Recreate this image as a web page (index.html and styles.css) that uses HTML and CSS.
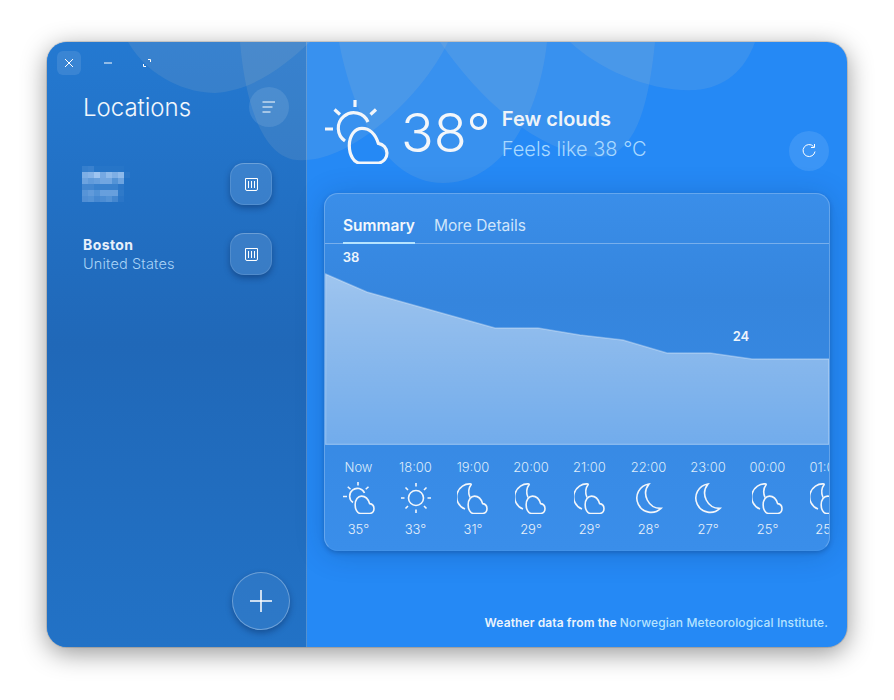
FILE: index.html
```html
<!DOCTYPE html>
<html lang="en">
<head>
  <meta charset="UTF-8">
  <meta name="viewport" content="width=device-width, initial-scale=1.0">
  <title>Weather</title>
  <link rel="stylesheet" href="styles.css">
</head>
<body>

<!-- Shared weather icons -->
<svg class="icon-defs" width="0" height="0">
  <symbol id="rays" viewBox="0 0 64 64">
    <path d="M30 0v7M0 29h8M9.500 9.500l5.500 5M51 9.500l-5.500 5"/>
  </symbol>
  <symbol id="cloud" viewBox="0 0 64 64">
    <path d="M35 63 C29 63 24.300 55 24.300 45.500 C24.300 35.500 30 28.300 37 28.300 C44.500 28.300 50.500 34 53.300 43.300 A10 10 0 0 1 54 63 Z"/>
  </symbol>
  <symbol id="sun-cloud" viewBox="0 0 64 64">
    <use href="#rays"/>
    <path d="M20 41 A15.500 15.500 0 1 1 43 22"/>
    <use href="#cloud"/>
  </symbol>
  <symbol id="sun" viewBox="0 0 64 64">
    <circle cx="32" cy="32" r="15"/>
    <path d="M32 2v7M32 55v7M2 32h7M55 32h7M11 11l5 5M53 11l-5 5M11 53l5-5M53 53l-5-5"/>
  </symbol>
  <symbol id="moon" viewBox="0 0 64 64">
    <path d="M32 4 A28.500 28.500 0 1 0 56 52.700 A30 30 0 0 1 32 4 Z"/>
  </symbol>
  <symbol id="moon-cloud" viewBox="0 0 64 64">
    <path d="M29 4 A26 26 0 0 0 16 54"/>
    <path d="M29 4 C23 12 22 22 26 31"/>
    <use href="#cloud" x="-2"/>
  </symbol>
</svg>

<div class="window">
  <!-- Background petals -->
  <svg class="petals" viewBox="47 42 800 605">
    <path d="M128 42 C150 80 190 93 215 93 C255 90 285 65 310 42 Z"/>
    <path d="M240 42 C245 100 262 165 305 160 C350 160 420 100 448 42 Z"/>
    <path d="M339 42 C350 100 380 183 443 183 C505 183 540 110 547 42 Z"/>
    <path d="M440 42 C480 100 540 155 600 157 C640 155 650 90 655 42 Z"/>
    <path d="M570 42 C600 70 650 92 695 90 C725 88 745 70 755 42 Z"/>
  </svg>

  <aside class="sidebar">
    <div class="window-controls">
      <button class="control control-close">
        <svg width="10" height="10" viewBox="0 0 10 10"><path d="M1 1l8 8M9 1l-8 8"/></svg>
      </button>
      <button class="control">
        <svg width="10" height="10" viewBox="0 0 10 10"><path d="M1 5h8"/></svg>
      </button>
      <button class="control">
        <svg width="10" height="10" viewBox="0 0 10 10"><path d="M6 1.500h2.500v2.500M1.500 6v2.500h2.500"/></svg>
      </button>
    </div>

    <div class="sidebar-head">
      <h1 class="sidebar-title">Locations</h1>
      <button class="round-btn">
        <svg width="14" height="12" viewBox="0 0 14 12"><path d="M0.500 1h12.500M0.500 6h10M0.500 11h8"/></svg>
      </button>
    </div>

    <div class="location">
      <!-- Censored city name -->
      <svg class="mosaic" width="48" height="36" viewBox="0 0 48 36">
        <g fill="#c8e0ff">
          <rect x="0" y="0" width="6" height="6" opacity=".12"/><rect x="6" y="0" width="6" height="6" opacity=".14"/>
          <rect x="12" y="0" width="30" height="6" opacity=".03"/>
          <rect x="0" y="6" width="6" height="6" opacity=".55"/><rect x="6" y="6" width="6" height="6" opacity=".6"/>
          <rect x="12" y="6" width="6" height="6" opacity=".75"/><rect x="18" y="6" width="6" height="6" opacity=".5"/>
          <rect x="24" y="6" width="6" height="6" opacity=".65"/><rect x="30" y="6" width="6" height="6" opacity=".55"/>
          <rect x="36" y="6" width="6" height="6" opacity=".65"/><rect x="42" y="6" width="6" height="6" opacity=".05"/>
          <rect x="0" y="12" width="6" height="6" opacity=".45"/><rect x="6" y="12" width="6" height="6" opacity=".38"/>
          <rect x="12" y="12" width="6" height="6" opacity=".42"/><rect x="18" y="12" width="6" height="6" opacity=".48"/>
          <rect x="24" y="12" width="6" height="6" opacity=".48"/><rect x="30" y="12" width="6" height="6" opacity=".3"/>
          <rect x="36" y="12" width="6" height="6" opacity=".45"/>
          <rect x="0" y="18" width="6" height="6" opacity=".2"/><rect x="6" y="18" width="6" height="6" opacity=".2"/>
          <rect x="12" y="18" width="24" height="6" opacity=".14"/><rect x="36" y="18" width="6" height="6" opacity=".06"/>
          <rect x="0" y="24" width="6" height="6" opacity=".32"/><rect x="6" y="24" width="6" height="6" opacity=".38"/>
          <rect x="12" y="24" width="6" height="6" opacity=".3"/><rect x="18" y="24" width="6" height="6" opacity=".42"/>
          <rect x="24" y="24" width="6" height="6" opacity=".42"/><rect x="30" y="24" width="6" height="6" opacity=".42"/>
          <rect x="36" y="24" width="6" height="6" opacity=".08"/>
          <rect x="0" y="30" width="6" height="6" opacity=".28"/><rect x="6" y="30" width="6" height="6" opacity=".3"/>
          <rect x="12" y="30" width="6" height="6" opacity=".22"/><rect x="18" y="30" width="6" height="6" opacity=".25"/>
          <rect x="24" y="30" width="6" height="6" opacity=".3"/><rect x="30" y="30" width="6" height="6" opacity=".2"/>
          <rect x="36" y="30" width="6" height="6" opacity=".05"/>
        </g>
      </svg>
      <button class="trash-btn">
        <svg width="13" height="15" viewBox="0 0 13 15"><path d="M0.500 1.500h12v10.500a1.500 1.500 0 0 1-1.500 1.500h-9a1.500 1.500 0 0 1-1.500-1.500zM3.500 4v7M6.500 4v7M9.500 4v7"/></svg>
      </button>
    </div>

    <div class="location">
      <div class="location-text">
        <div class="location-city">Boston</div>
        <div class="location-country">United States</div>
      </div>
      <button class="trash-btn">
        <svg width="13" height="15" viewBox="0 0 13 15"><path d="M0.500 1.500h12v10.500a1.500 1.500 0 0 1-1.500 1.500h-9a1.500 1.500 0 0 1-1.500-1.500zM3.500 4v7M6.500 4v7M9.500 4v7"/></svg>
      </button>
    </div>

    <button class="add-btn">
      <svg width="22" height="22" viewBox="0 0 22 22"><path d="M11 0v22M0 11h22"/></svg>
    </button>
  </aside>

  <main class="main">
    <header class="current">
      <svg class="weather-icon current-icon"><use href="#sun-cloud"/></svg>
      <div class="current-temp">38°</div>
      <div class="current-text">
        <div class="current-cond">Few clouds</div>
        <div class="current-feels">Feels like 38 °C</div>
      </div>
      <button class="round-btn refresh-btn">
        <svg width="16" height="16" viewBox="0 0 16 16"><path d="M14 8.500A6 6 0 1 1 12.500 3.500M13.500 1v3.500H10"/></svg>
      </button>
    </header>

    <section class="card">
      <div class="tabs">
        <div class="tab tab-active">Summary</div>
        <div class="tab">More Details</div>
      </div>

      <svg class="chart" viewBox="0 0 504 201">
        <defs>
          <linearGradient id="area" x1="0" y1="0" x2="0" y2="1">
            <stop offset="0" stop-color="#fff" stop-opacity=".52"/>
            <stop offset="1" stop-color="#fff" stop-opacity=".29"/>
          </linearGradient>
        </defs>
        <path class="chart-area" d="M0.500 30 L42 48 L170 84 L213 84 L255 91 L298 96 L342 109 L385 109 L427 115 L504 115 V200.500 H0.500 Z"/>
        <text class="chart-label" x="26" y="18" text-anchor="middle">38</text>
        <text class="chart-label" x="416" y="97" text-anchor="middle">24</text>
      </svg>

      <div class="hours">
        <div class="hour"><div class="hour-time">Now</div><svg class="weather-icon hour-icon"><use href="#sun-cloud"/></svg><div class="hour-temp">35°</div></div>
        <div class="hour"><div class="hour-time">18:00</div><svg class="weather-icon hour-icon"><use href="#sun"/></svg><div class="hour-temp">33°</div></div>
        <div class="hour"><div class="hour-time">19:00</div><svg class="weather-icon hour-icon"><use href="#moon-cloud"/></svg><div class="hour-temp">31°</div></div>
        <div class="hour"><div class="hour-time">20:00</div><svg class="weather-icon hour-icon"><use href="#moon-cloud"/></svg><div class="hour-temp">29°</div></div>
        <div class="hour"><div class="hour-time">21:00</div><svg class="weather-icon hour-icon"><use href="#moon-cloud"/></svg><div class="hour-temp">29°</div></div>
        <div class="hour"><div class="hour-time">22:00</div><svg class="weather-icon hour-icon"><use href="#moon"/></svg><div class="hour-temp">28°</div></div>
        <div class="hour"><div class="hour-time">23:00</div><svg class="weather-icon hour-icon"><use href="#moon"/></svg><div class="hour-temp">27°</div></div>
        <div class="hour"><div class="hour-time">00:00</div><svg class="weather-icon hour-icon"><use href="#moon-cloud"/></svg><div class="hour-temp">25°</div></div>
        <div class="hour"><div class="hour-time">01:00</div><svg class="weather-icon hour-icon"><use href="#moon-cloud"/></svg><div class="hour-temp">25°</div></div>
      </div>
    </section>

    <footer class="credit">Weather data from the <span class="credit-link">Norwegian Meteorological Institute.</span></footer>
  </main>
</div>

</body>
</html>
```

FILE: styles.css
```css
/* General styles */
body {
  height: 700px;
  margin: 0;
  padding: 42px 0 0 47px;
  box-sizing: border-box;
  background: #fff;
  font-family: Inter, "Noto Sans", sans-serif;
  color: #fff;
}

button {
  padding: 0;
  border: none;
  background: none;
  color: inherit;
  cursor: pointer;
}

button svg {
  display: block;
  fill: none;
  stroke: currentColor;
  stroke-width: 1;
}

.icon-defs {
  position: absolute;
}

/* Window */
.window {
  position: relative;
  display: flex;
  width: 800px;
  height: 605px;
  overflow: hidden;
  border-radius: 20px;
  background: #2589f5;
  box-shadow: 0 0 0 1px rgba(0, 0, 0, 0.12), 0 6px 26px rgba(0, 0, 0, 0.42);
}

.petals {
  position: absolute;
  top: 0;
  left: 0;
  width: 800px;
  height: 605px;
  z-index: 1;
  fill: rgba(215, 205, 195, 0.11);
  pointer-events: none;
}

/* Sidebar */
.sidebar {
  display: flex;
  flex-direction: column;
  flex: none;
  width: 260px;
  padding-right: 17px;
  box-sizing: border-box;
  border-right: 1px solid rgba(255, 255, 255, 0.22);
  background: linear-gradient(#2479d1, #2068b8 50%, #2272c6);
}

.window-controls {
  display: flex;
  align-items: center;
  gap: 15px;
  padding: 9px 0 0 10px;
}

.control {
  display: flex;
  align-items: center;
  justify-content: center;
  width: 24px;
  height: 24px;
  border-radius: 6px;
}

.control-close {
  background: rgba(255, 255, 255, 0.1);
}

.sidebar-head {
  position: relative;
  z-index: 2;
  display: flex;
  align-items: center;
  justify-content: space-between;
  margin: 12px 0 0 36px;
}

.sidebar-title {
  margin: 0;
  font-size: 24px;
  font-weight: 300;
  color: #f2f7fc;
}

.round-btn {
  display: flex;
  align-items: center;
  justify-content: center;
  width: 40px;
  height: 40px;
  border-radius: 50%;
  background: rgba(255, 255, 255, 0.1);
}

.location {
  position: relative;
  z-index: 2;
  display: flex;
  align-items: center;
  justify-content: space-between;
  height: 42px;
  margin: 0 17px 0 35px;
}

.sidebar-head + .location {
  margin-top: 36px;
}

.location + .location {
  margin-top: 28px;
}

.location-text {
  margin-left: 1px;
}

.location-city {
  font-size: 14px;
  font-weight: 700;
  line-height: 20px;
  letter-spacing: 0.4px;
  color: #e8f1fb;
}

.location-country {
  font-size: 14.5px;
  font-weight: 300;
  line-height: 18px;
  letter-spacing: 0.15px;
  color: #a9d3f7;
}

.trash-btn {
  display: flex;
  align-items: center;
  justify-content: center;
  width: 42px;
  height: 42px;
  box-sizing: border-box;
  border: 1px solid rgba(255, 255, 255, 0.12);
  border-top-color: rgba(255, 255, 255, 0.25);
  border-radius: 14px;
  background: rgba(255, 255, 255, 0.11);
  box-shadow: 0 3px 6px rgba(0, 20, 60, 0.35);
}

.add-btn {
  display: flex;
  align-items: center;
  justify-content: center;
  width: 58px;
  height: 58px;
  margin: auto 0 17px 185px;
  box-sizing: border-box;
  border: 1px solid rgba(255, 255, 255, 0.3);
  border-radius: 50%;
  background: rgba(255, 255, 255, 0.05);
  box-shadow: 0 3px 6px rgba(0, 20, 60, 0.35);
}

.add-btn svg {
  stroke-width: 1.5;
}

/* Main column */
.main {
  position: relative;
  z-index: 2;
  display: flex;
  flex-direction: column;
  flex: 1;
  min-width: 0;
  padding: 58px 17px 0 17px;
}

.weather-icon {
  display: block;
  flex: none;
  overflow: visible;
  fill: none;
  stroke: #f3f6fa;
  stroke-width: 3.2;
}

.current {
  display: flex;
  height: 71px;
}

.current-icon {
  width: 64px;
  height: 64px;
  margin-left: 1px;
}

.current-temp {
  margin: 0 0 0 12px;
  font-size: 54px;
  font-weight: 300;
  line-height: 66px;
  color: #f3f6fa;
}

.current-text {
  margin: 6px 0 0 11px;
}

.current-cond {
  font-size: 20px;
  font-weight: 600;
  line-height: 26px;
  color: #eef3f8;
}

.current-feels {
  margin-top: 4px;
  font-size: 20px;
  font-weight: 300;
  line-height: 26px;
  color: #a8d8ff;
}

.refresh-btn {
  align-self: flex-end;
  margin: 0 1px 0 auto;
}

/* Forecast card */
.card {
  display: flex;
  flex-direction: column;
  height: 358px;
  margin-top: 22px;
  overflow: hidden;
  box-sizing: border-box;
  border: 1px solid rgba(255, 255, 255, 0.22);
  border-bottom-color: rgba(255, 255, 255, 0.04);
  border-radius: 14px;
  background: linear-gradient(#3a8ee9, #3585dd 30%, #3a8eea);
  box-shadow: 0 2px 4px rgba(0, 30, 80, 0.25), 0 3px 30px rgba(0, 30, 80, 0.2);
}

.tabs {
  display: flex;
  flex: none;
  gap: 19px;
  height: 50px;
  padding-left: 18px;
  box-sizing: border-box;
  border-bottom: 1px solid rgba(255, 255, 255, 0.32);
}

.tab {
  height: 50px;
  padding-top: 22px;
  box-sizing: border-box;
  font-size: 15.5px;
  line-height: 20px;
  color: #cfe5fb;
}

.tab-active {
  border-bottom: 2px solid #b5e3ff;
  font-weight: 600;
  color: #f2f7fc;
}

.chart {
  display: block;
  flex: none;
  width: 504px;
  height: 201px;
}

.chart-area {
  fill: url(#area);
  stroke: rgba(255, 255, 255, 0.3);
  stroke-width: 1.5;
}

.chart-label {
  font-size: 13px;
  font-weight: 600;
  fill: #eef5fc;
}

/* Hourly row */
.hours {
  display: grid;
  grid-template-columns: 57px 57px 58px 58px 59px 59px 60px 59px 58px;
  padding: 14px 0 0 5px;
}

.hour {
  display: flex;
  flex-direction: column;
  align-items: center;
}

.hour-time {
  font-size: 13px;
  font-weight: 300;
  line-height: 16px;
  color: #dcebfb;
}

.hour-icon {
  width: 32px;
  height: 32px;
  margin-top: 7px;
}

.hour-temp {
  margin-top: 7px;
  font-size: 13px;
  font-weight: 300;
  line-height: 16px;
  color: #e8f1fb;
}

/* Footer */
.credit {
  margin: auto 2px 16px 0;
  font-size: 12px;
  font-weight: 600;
  line-height: 16px;
  letter-spacing: 0.11px;
  text-align: right;
  color: #eaf3fc;
}

.credit-link {
  font-weight: 500;
  color: #b5e3ff;
}
```
